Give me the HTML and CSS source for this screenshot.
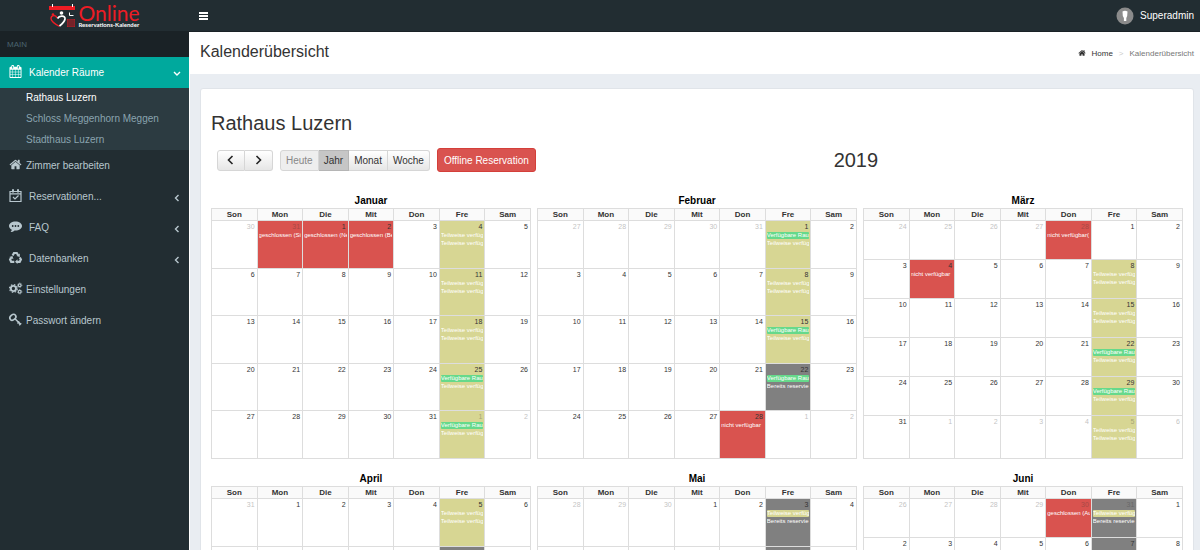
FILE: index.html
```html
<!DOCTYPE html>
<html lang="de">
<head>
<meta charset="utf-8">
<title>Kalenderübersicht</title>
<link rel="stylesheet" href="styles.css">
</head>
<body>
<div class="app">
  <header class="topbar">
    <a class="logo" href="#">
      <svg class="logo-mark" viewBox="0 0 27 24" aria-hidden="true">
        <path fill="#ed1c24" d="M0 2h26v4H0z"/>
        <path fill="#fff" d="M3 0h1v3H3zM23 0h1v3h-1z"/>
        <path fill="none" stroke="#ed1c24" stroke-width="1.400" d="M10.500 22.500C5 19.500 2 17 2 14.500c0-3.500 5-4 6-.5"/>
        <circle cx="4" cy="10.500" r="1.300" fill="#ed1c24"/>
        <circle cx="12.500" cy="9" r="1.800" fill="#fff"/>
        <path fill="none" stroke="#fff" stroke-width="1.700" d="M8.500 14.500c2-3.500 8-3 7.500.5-.5 3-3 5-5.500 7"/>
        <path fill="none" stroke="#fff" d="M20.500 8.500v3h4"/>
        <path fill="#b51c24" d="M18 15h8v8h-8z"/>
        <path stroke="#222d32" stroke-width=".5" d="M20 15v8M22 15v8M24 15v8M18 17h8M18 19h8M18 21h8"/>
      </svg>
      <span class="logo-text"><span class="logo-name">Online</span><span class="logo-sub">Reservations-Kalender</span></span>
    </a>
    <button class="menu-toggle" type="button" aria-label="Menü">
      <svg viewBox="0 0 9 8"><path d="M0 0h9v2H0zM0 3h9v2H0zM0 6h9v2H0z"/></svg>
    </button>
    <a class="user" href="#">
      <svg class="avatar" viewBox="0 0 18 18" aria-hidden="true"><circle cx="9" cy="9" r="8.500" fill="#8b8b8b"/><path fill="#fff" d="M6.500 4.500Q9 3 11.500 4.500L11.200 9l-.9 2v3H7.900v-3L6.800 9z"/></svg>
      Superadmin
    </a>
  </header>

  <nav class="sidebar">
    <div class="nav-header">MAIN</div>
    <a class="nav-item nav-tree active" href="#">
      <svg class="icon" viewBox="0 0 1792 1792"><path d="M192 1664h288v-288h-288v288zm352 0h320v-288h-320v288zm-352-352h288v-320h-288v320zm352 0h320v-320h-320v320zm-352-384h288v-288h-288v288zm736 736h320v-288h-320v288zm-384-736h320v-288h-320v288zm768 736h288v-288h-288v288zm-384-352h320v-320h-320v320zm-352-864v-288q0-13-9.500-22.500t-22.500-9.500h-64q-13 0-22.500 9.500t-9.500 22.500v288q0 13 9.500 22.500t22.500 9.500h64q13 0 22.500-9.500t9.500-22.500zm736 864h288v-320h-288v320zm-384-384h320v-288h-320v288zm384 0h288v-288h-288v288zm32-480v-288q0-13-9.500-22.500t-22.500-9.500h-64q-13 0-22.500 9.500t-9.500 22.500v288q0 13 9.500 22.500t22.500 9.500h64q13 0 22.500-9.500t9.500-22.500zm384-64v1280q0 52-38 90t-90 38h-1408q-52 0-90-38t-38-90v-1280q0-52 38-90t90-38h128v-96q0-66 47-113t113-47h64q66 0 113 47t47 113v96h384v-96q0-66 47-113t113-47h64q66 0 113 47t47 113v96h128q52 0 90 38t38 90z"/></svg>
      <span class="nav-label">Kalender Räume</span>
      <svg class="caret" viewBox="0 0 8 8"><path d="M1 2l3 3 3-3"/></svg>
    </a>
    <div class="subnav">
      <a class="current" href="#">Rathaus Luzern</a>
      <a href="#">Schloss Meggenhorn Meggen</a>
      <a href="#">Stadthaus Luzern</a>
    </div>
    <a class="nav-item" href="#">
      <svg class="icon" viewBox="0 0 1792 1792"><path d="M1472 992v480q0 26-19 45t-45 19h-384v-384h-256v384h-384q-26 0-45-19t-19-45v-480q0-1 .5-3t.5-3l575-474 575 474q1 2 1 6zm223-69l-62 74q-8 9-21 11h-3q-13 0-21-7l-692-577-692 577q-12 8-24 7-13-2-21-11l-62-74q-8-10-7-23.500t11-21.500l719-599q32-26 76-26t76 26l244 204v-195q0-14 9-23t23-9h192q14 0 23 9t9 23v408l219 182q10 8 11 21.500t-7 23.500z"/></svg>
      <span class="nav-label">Zimmer bearbeiten</span>
    </a>
    <a class="nav-item nav-tree" href="#">
      <svg class="icon" viewBox="0 0 13 13"><path fill="none" stroke="currentColor" stroke-width="1.200" d="M1 2.500h11v10H1zM1 4.800h11M4 8l2 2 3.500-3.500"/><path d="M3 .2h2v3.300H3zM8 .2h2v3.300H8z"/></svg>
      <span class="nav-label">Reservationen...</span>
      <svg class="caret" viewBox="0 0 8 8"><path d="M5.500 1l-3 3 3 3"/></svg>
    </a>
    <a class="nav-item nav-tree" href="#">
      <svg class="icon" viewBox="0 0 13 13"><path fill-rule="evenodd" d="M6.500 1.500c3.600 0 6.500 2 6.500 4.500s-2.900 4.500-6.500 4.500l-1-.1C4.500 11.500 3 12 1.500 12c.8-.7 1.200-1.400 1.300-2.300C1 8.800 0 7.500 0 6c0-2.500 2.900-4.500 6.500-4.500zM3.700 5.100a.9.9 0 1 0 0 1.800.9.9 0 0 0 0-1.800zm2.800 0a.9.9 0 1 0 0 1.800.9.9 0 0 0 0-1.800zm2.800 0a.9.9 0 1 0 0 1.800.9.9 0 0 0 0-1.800z"/></svg>
      <span class="nav-label">FAQ</span>
      <svg class="caret" viewBox="0 0 8 8"><path d="M5.500 1l-3 3 3 3"/></svg>
    </a>
    <a class="nav-item nav-tree" href="#">
      <svg class="icon" viewBox="0 0 13 13"><path fill="none" stroke="currentColor" stroke-width="2.200" d="M3.600 4.600L5 2h2.800l1.300 2.200M10.800 6.500l1.100 2.100-1.200 2.200H8M5.300 10.800H2.200L1.100 8.600l1-1.800"/><path d="M10.800 2.500v3.400L7.500 5zM8.500 8.300v4.700L6 10.800zM.2 6L3.400 5l1.100 3.300z"/></svg>
      <span class="nav-label">Datenbanken</span>
      <svg class="caret" viewBox="0 0 8 8"><path d="M5.500 1l-3 3 3 3"/></svg>
    </a>
    <a class="nav-item" href="#">
      <svg class="icon" viewBox="0 0 13 13"><g fill="none" stroke="currentColor"><circle cx="4.400" cy="6.500" r="2.600" stroke-width="1.900"/><circle cx="4.400" cy="6.500" r="3.900" stroke-width="1.200" stroke-dasharray="1.530"/><circle cx="10.700" cy="3.200" r="1.400" stroke-width="1.200"/><circle cx="10.700" cy="3.200" r="2.200" stroke-width=".7" stroke-dasharray=".86"/><circle cx="10.700" cy="9.800" r="1.400" stroke-width="1.200"/><circle cx="10.700" cy="9.800" r="2.200" stroke-width=".7" stroke-dasharray=".86"/></g></svg>
      <span class="nav-label">Einstellungen</span>
    </a>
    <a class="nav-item" href="#">
      <svg class="icon" viewBox="0 0 13 13"><g fill="none" stroke="currentColor"><ellipse cx="3.900" cy="4.300" rx="3.300" ry="2.500" stroke-width="1.600" transform="rotate(-40 3.900 4.300)"/><path stroke-width="1.500" d="M6 5.800l5.500 5.500M8.500 10.500l1.900-1.900M10.200 12.200l2-2"/></g></svg>
      <span class="nav-label">Passwort ändern</span>
    </a>
  </nav>

  <main class="main">
    <div class="page-head">
      <h1 class="page-title">Kalenderübersicht</h1>
      <nav class="breadcrumb" aria-label="Pfad">
        <a href="#"><svg class="crumb-icon" viewBox="0 0 1792 1792"><path d="M1472 992v480q0 26-19 45t-45 19h-384v-384h-256v384h-384q-26 0-45-19t-19-45v-480l576-480 576 480zm223-69l-62 74q-20 20-45 4l-692-577-692 577q-25 16-45-4l-62-74q-12-25 4-45l719-599q76-52 152 0l244 204v-195q0-32 32-32h192q32 0 32 32v408l219 182q16 20 4 45z"/></svg>Home</a>
        <span class="crumb-sep">&gt;</span>
        <span>Kalenderübersicht</span>
      </nav>
    </div>
    <section class="box">
      <h2 class="room">Rathaus Luzern</h2>
      <div class="toolbar">
        <div class="btn-group btn-arrows">
          <button type="button" aria-label="Zurück"><svg viewBox="0 0 8 8"><path d="M5.500 0l-4 4 4 4"/></svg></button>
          <button type="button" aria-label="Weiter"><svg viewBox="0 0 8 8"><path d="M2.500 0l4 4-4 4"/></svg></button>
        </div>
        <div class="btn-group">
          <button type="button" class="dim" disabled>Heute</button>
          <button type="button" class="on">Jahr</button>
          <button type="button">Monat</button>
          <button type="button">Woche</button>
        </div>
        <button type="button" class="btn-offline">Offline Reservation</button>
        <h2 class="year">2019</h2>
      </div>
      <div class="months" id="months"></div>
    </section>
  </main>
</div>
<script src="calendar.js"></script>
</body>
</html>
```
FILE: styles.css
```css
* { box-sizing: border-box; }
body {
  margin: 0;
  font-family: "Liberation Sans", Arial, sans-serif;
  font-size: 10px;
  color: #333;
  background: #e9edf2;
}
a { color: inherit; text-decoration: none; }
h1, h2, h3 { margin: 0; font-weight: normal; }
button { font: inherit; cursor: pointer; }
svg { display: block; fill: currentColor; }

.app {
  display: grid;
  grid-template: auto 1fr / 189px 1fr;
  height: 100vh;
  overflow: hidden;
}

.topbar {
  grid-column: 1 / -1;
  display: flex;
  align-items: center;
  height: 32px;
  padding-right: 6px;
  background: #222d32;
  border-bottom: 1px solid #1a2226;
  color: #fff;
}
.logo { display: flex; justify-content: center; gap: 2px; width: 189px; }
.logo-mark { width: 27px; height: 24px; }
.logo-text { display: flex; flex-direction: column; font-family: Lato, sans-serif; }
.logo-name { font-size: 21px; line-height: 18px; color: #ed1c24; }
.logo-sub { font-size: 6px; font-weight: bold; line-height: 6px; }
.menu-toggle { margin-left: 6px; padding: 4px; border: 0; background: none; color: #fff; }
.menu-toggle svg { width: 9px; height: 8px; }
.user { display: flex; align-items: center; gap: 6px; margin-left: auto; }
.avatar { width: 18px; height: 18px; }

.sidebar { background: #222d32; color: #b8c7ce; }
.nav-header {
  height: 25px;
  padding-left: 7px;
  background: #1a2226;
  color: #4b646f;
  font-size: 8px;
  line-height: 25px;
}
.nav-item { display: flex; align-items: center; gap: 4px; height: 31px; padding: 0 8px 0 9px; }
.nav-tree { gap: 7px; }
.nav-label { flex: 1; }
.active { background: #00a99d; color: #fff; }
.icon { width: 13px; height: 13px; margin-bottom: 2px; overflow: visible; }
.caret { width: 8px; height: 8px; margin-top: 3px; fill: none; stroke: currentColor; stroke-width: 1.4; }
.subnav {
  display: grid;
  gap: 1px;
  padding-left: 26px;
  background: #2c3b41;
  color: #8aa4af;
  line-height: 20px;
}
.current { color: #fff; }

.main { min-width: 0; border-left: 1px solid #fff; overflow: hidden; }
.page-head {
  display: flex;
  align-items: center;
  justify-content: space-between;
  height: 42px;
  padding: 0 6px 0 10px;
  background: #fff;
}
.page-title { font-size: 16px; line-height: 38px; margin-bottom: 3px; }
.breadcrumb { display: flex; gap: 6px; font-size: 8px; color: #777; }
.breadcrumb a { display: flex; gap: 6px; color: #333; }
.crumb-icon { width: 8px; height: 8px; }
.crumb-sep { color: #ccc; }

.box {
  margin: 14px 6px 0 10px;
  padding: 22px 10px 20px;
  background: #fff;
  border: 1px solid #e0e4e9;
  border-radius: 3px;
}
.room { font-size: 20px; line-height: 24px; }
.toolbar { display: flex; align-items: center; gap: 7px; height: 24px; margin: 13px 6px 22px; }
.btn-group { display: flex; height: 21px; }
.btn-group button {
  padding: 0 5px;
  border: 1px solid #d6d6d6;
  border-left-width: 0;
  background: linear-gradient(#fff, #e6e6e6);
  color: #333;
}
.btn-group button:first-child { border-left-width: 1px; border-radius: 3px 0 0 3px; }
.btn-group button:last-child { border-radius: 0 3px 3px 0; }
.btn-arrows button { width: 28px; padding: 0 9px; }
.btn-arrows svg { width: 8px; height: 8px; fill: none; stroke: #222; stroke-width: 1.6; overflow: visible; }
.btn-group .dim { background: #eee; color: #888; }
.btn-group .on { background: #c6c6c6; border-color: #b5b5b5; }
.btn-offline {
  height: 24px;
  padding: 0 6px;
  border: 1px solid #d43f3a;
  border-radius: 3px;
  background: #d9534f;
  color: #fff;
}
.year { flex: 1; padding-right: 8px; font-size: 20px; line-height: 24px; text-align: center; }

.months { display: grid; grid-template-columns: repeat(3, 1fr); gap: 13px 6px; align-items: start; }
.month-name { font-size: 10px; font-weight: bold; line-height: 14px; text-align: center; color: #000; }
.month-table { width: 100%; border-collapse: collapse; table-layout: fixed; }
.month-table th, .month-table td { padding: 0; border: 1px solid #ddd; }
.month-table th { height: 12px; background: #fafafa; font-size: 8px; line-height: 11px; }
.month-table td { height: 48px; vertical-align: top; }
.month-full { height: 251px; }
.month-full td { height: 47px; }
.month-dense td { height: 39px; }
.month-full.month-dense tr:last-child td { height: 43px; }
.day { padding: 0 2px; font-size: 7px; line-height: 11px; text-align: right; }
.other .day { opacity: .3; }
.event {
  margin: 0 1px 1px;
  border-radius: 1px;
  color: #fff;
  font-size: 6px;
  line-height: 7px;
  white-space: nowrap;
  overflow: hidden;
}
.closed { background: #d9534f; }
.partial { background: #d7d693; }
.booked { background: #808080; }
.free { background: #66d98b; }
```
FILE: calendar.js
```js
const WEEKDAYS = ["Son", "Mon", "Die", "Mit", "Don", "Fre", "Sam"];

const partial = ["partial", "Teilweise verfüg"];
const free = ["free", "Verfügbare Rau"];
const booked = ["booked", "Bereits reservie"];
const closed = (text) => ["closed", text];

// lead: days shown from the previous month, prev/days: month lengths.
// cells: position in the grid -> [cell state, ...events]
const MONTHS = [
  { name: "Januar", lead: 2, prev: 31, days: 31, weeks: 5, full: true, cells: {
    1: ["closed", closed("geschlossen (Si")],
    2: ["closed", closed("geschlossen (Ne")],
    3: ["closed", closed("geschlossen (Be")],
    5: ["partial", partial, partial],
    12: ["partial", partial, partial],
    19: ["partial", partial, partial],
    26: ["partial", free, partial],
    33: ["partial", free, partial] } },
  { name: "Februar", lead: 5, prev: 31, days: 28, weeks: 5, full: true, cells: {
    5: ["partial", free, partial],
    12: ["partial", partial, partial],
    19: ["partial", free, partial],
    26: ["booked", free, booked],
    32: ["closed", closed("nicht verfügbar")] } },
  { name: "März", lead: 5, prev: 28, days: 31, weeks: 6, full: true, cells: {
    4: ["closed", closed("nicht verfügbar(")],
    8: ["closed", closed("nicht verfügbar")],
    12: ["partial", partial, partial],
    19: ["partial", partial, partial],
    26: ["partial", free, partial],
    33: ["partial", free, partial],
    40: ["partial", partial, partial] } },
  { name: "April", lead: 1, prev: 31, days: 30, weeks: 2, cells: {
    5: ["partial", partial, partial],
    12: ["booked"] } },
  { name: "Mai", lead: 3, prev: 30, days: 31, weeks: 2, cells: {
    5: ["booked", partial, booked],
    12: ["booked"] } },
  { name: "Juni", lead: 6, prev: 31, days: 30, weeks: 2, dense: true, cells: {
    4: ["closed", closed("geschlossen (Au")],
    5: ["booked", partial, booked],
    12: ["booked"] } }
];

function renderCell(month, index) {
  let day = index - month.lead + 1;
  let other = false;
  if (day < 1) { day += month.prev; other = true; }
  else if (day > month.days) { day -= month.days; other = true; }
  const [state = "", ...events] = month.cells[index] || [];
  const list = events.map(([type, text]) => `<div class="event ${type}">${text}</div>`).join("");
  return `<td class="${state}${other ? " other" : ""}"><div class="day">${day}</div>${list}</td>`;
}

function renderMonth(month) {
  let rows = "";
  for (let week = 0; week < month.weeks; week++) {
    rows += "<tr>" + WEEKDAYS.map((_, i) => renderCell(month, week * 7 + i)).join("") + "</tr>";
  }
  const head = WEEKDAYS.map((name) => `<th scope="col">${name}</th>`).join("");
  const dense = month.weeks === 6 || month.dense ? " month-dense" : "";
  const full = month.full ? " month-full" : "";
  return `<section><h3 class="month-name">${month.name}</h3>
    <table class="month-table${full}${dense}"><thead><tr>${head}</tr></thead><tbody>${rows}</tbody></table></section>`;
}

document.getElementById("months").innerHTML = MONTHS.map(renderMonth).join("");
```
